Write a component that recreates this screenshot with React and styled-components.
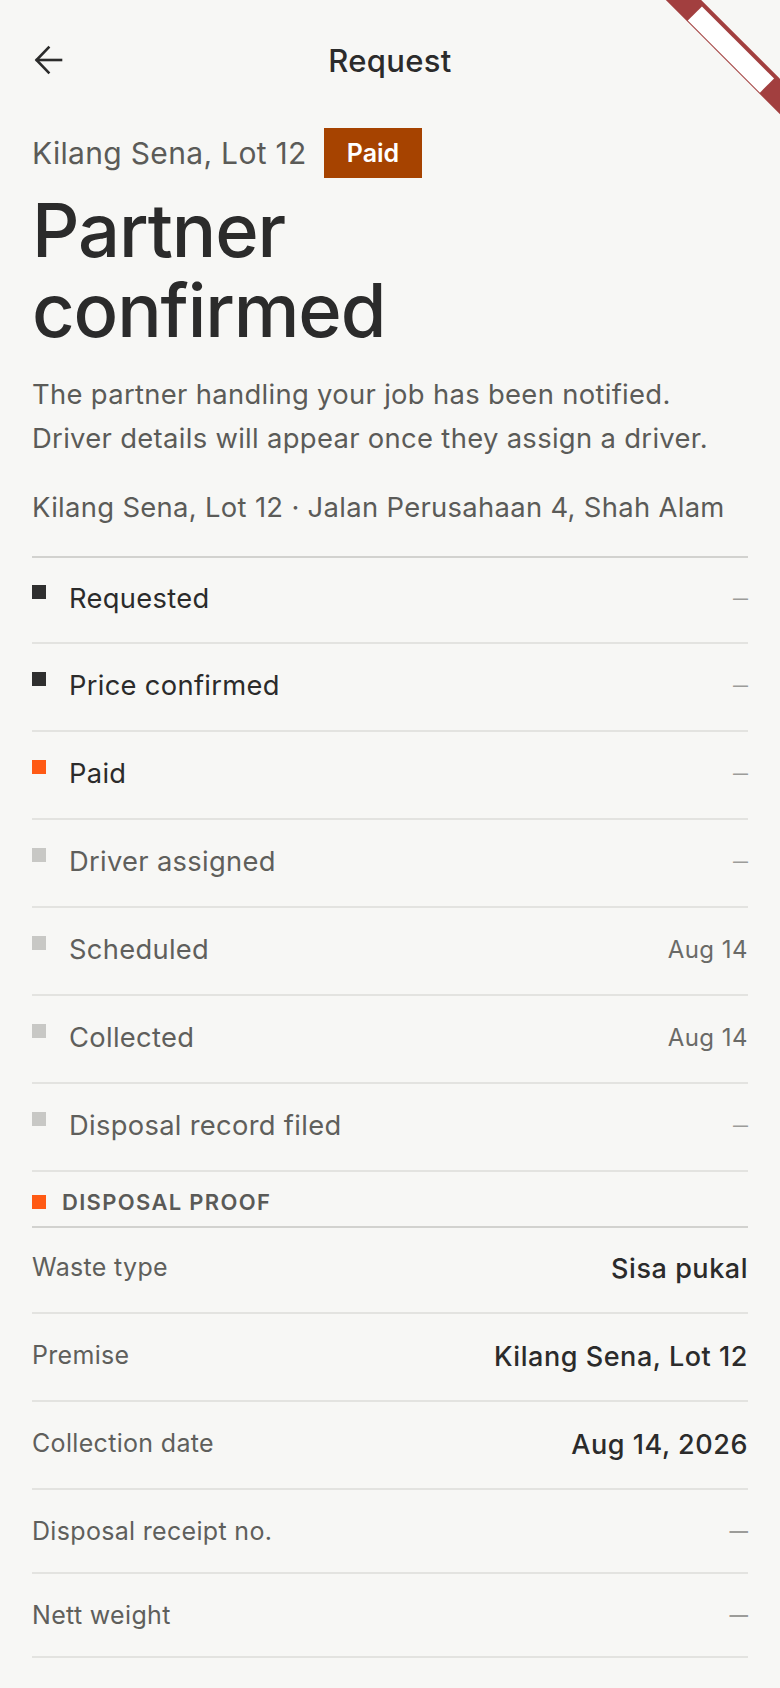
import React from "react";
import styled, { createGlobalStyle } from "styled-components";

const Global = createGlobalStyle`
  html, body { margin: 0; padding: 0; background: #F7F7F5; }
  body { font-family: Inter, "Noto Sans", sans-serif; -webkit-font-smoothing: antialiased; }
  * { box-sizing: border-box; }
`;

const Page = styled.div`
  position: relative;
  overflow: hidden;
  min-height: 1688px;
  padding: 0 32px 32px;
  background: #F7F7F5;
  color: #2B2B2B;
  letter-spacing: 0.02em;
`;

const Ribbon = styled.div`
  position: absolute;
  top: 35.5px;
  right: -72px;
  width: 240px;
  height: 25px;
  transform: rotate(45deg);
  background: #A23F3F;
  display: flex;
  justify-content: center;
  align-items: flex-start;
  padding-top: 3.5px;
  pointer-events: none;
`;

const RibbonLabel = styled.div`
  width: 102px;
  height: 20px;
  background: #FFFFFF;
`;

const Header = styled.header`
  display: grid;
  grid-template-columns: 48px 1fr 48px;
  align-items: center;
  height: 120px;
`;

const BackButton = styled.button`
  display: flex;
  align-items: center;
  justify-content: flex-start;
  padding: 0 0 0 2px;
  border: 0;
  background: none;
  color: #2B2B2B;
  cursor: pointer;
`;

const Title = styled.h2`
  margin: 0;
  text-align: center;
  font-size: 31px;
  font-weight: 500;
  color: #2B2B2B;
`;

const SubRow = styled.div`
  display: flex;
  align-items: center;
  gap: 17px;
  margin-top: 8px;
`;

const SubText = styled.span`
  font-size: 30px;
  color: #5B5B58;
`;

const Badge = styled.span`
  display: inline-flex;
  align-items: center;
  height: 50px;
  padding: 0 23px;
  background: #A64300;
  color: #FFFFFF;
  font-size: 25px;
  font-weight: 600;
  letter-spacing: 0;
`;

const Heading = styled.h1`
  margin: 12px 0 0;
  font-size: 74px;
  line-height: 80px;
  font-weight: 500;
  letter-spacing: -0.015em;
  color: #2B2B2B;
`;

const Lead = styled.p`
  margin: 22px 0 0;
  font-size: 27.4px;
  line-height: 44px;
  color: #5B5B58;
`;

const Address = styled.p`
  margin: 26px 0 0;
  font-size: 27.4px;
  line-height: 42px;
  color: #5B5B58;
`;

const StatusList = styled.ul`
  list-style: none;
  margin: 28px 0 0;
  padding: 0;
  border-top: 2px solid #D2D2CF;
`;

const StatusRow = styled.li`
  display: flex;
  align-items: center;
  min-height: 88px;
  padding-bottom: 3px;
  border-bottom: 2px solid #E3E3E0;

  &:first-child {
    min-height: 86px;
  }
`;

const Marker = styled.span`
  flex: none;
  width: 14px;
  height: 14px;
  margin-bottom: ${(p) => p.$lift || 0}px;
  background: ${(p) => p.$color};
`;

const StatusLabel = styled.span`
  margin-left: 23px;
  font-size: 27.3px;
  color: ${(p) => (p.$done ? "#2B2B2B" : "#5F5F5C")};
`;

const StatusValue = styled.span`
  margin-left: auto;
  font-size: ${(p) => (p.$empty ? 15 : 24)}px;
  font-weight: ${(p) => (p.$empty ? 600 : 400)};
  letter-spacing: ${(p) => (p.$empty ? 0 : "0.02em")};
  color: ${(p) => (p.$empty ? "#9C9C99" : "#6A6A67")};
`;

const SectionHeader = styled.div`
  display: flex;
  align-items: center;
  gap: 16px;
  height: 56px;
  padding-top: 5px;
  border-bottom: 2px solid #D2D2CF;
`;

const SectionTitle = styled.span`
  font-size: 22px;
  font-weight: 600;
  letter-spacing: 0.06em;
  color: #5A5A57;
`;

const KvRow = styled.div`
  display: flex;
  align-items: flex-start;
  justify-content: space-between;
  padding: 23px 0;
  border-bottom: 2px solid #E3E3E0;

  ${SectionHeader} + & {
    padding-top: 21px;
  }
`;

const KvLabel = styled.span`
  font-size: 25px;
  line-height: 36px;
  color: #5F5F5C;
`;

const KvValue = styled.span`
  font-size: ${(p) => (p.$empty ? 18.5 : 27)}px;
  line-height: ${(p) => (p.$empty ? 36 : 40)}px;
  font-weight: ${(p) => (p.$empty ? 600 : 500)};
  letter-spacing: ${(p) => (p.$empty ? 0 : "0.02em")};
  color: ${(p) => (p.$empty ? "#9C9C99" : "#2B2B2B")};
`;

const ArrowLeft = () => (
  <svg width="30" height="30" viewBox="0 0 30 30" fill="none" stroke="currentColor" strokeWidth="2.6" strokeLinecap="square" strokeLinejoin="miter">
    <path d="M27 15H3" />
    <path d="M14.5 2.5 2.5 15 14.5 27.5" />
  </svg>
);

const DARK = "#2F2F2F";
const ORANGE = "#FF5A14";
const LIGHT = "#C8C8C5";
const DASH = "—";

const steps = [
  { label: "Requested", color: DARK, done: true, value: DASH },
  { label: "Price confirmed", color: DARK, done: true, value: DASH },
  { label: "Paid", color: ORANGE, done: true, value: DASH },
  { label: "Driver assigned", color: LIGHT, done: false, value: DASH },
  { label: "Scheduled", color: LIGHT, done: false, value: "Aug 14" },
  { label: "Collected", color: LIGHT, done: false, value: "Aug 14" },
  { label: "Disposal record filed", color: LIGHT, done: false, value: DASH },
];

const proof = [
  { label: "Waste type", value: "Sisa pukal" },
  { label: "Premise", value: "Kilang Sena, Lot 12" },
  { label: "Collection date", value: "Aug 14, 2026" },
  { label: "Disposal receipt no.", value: DASH },
  { label: "Nett weight", value: DASH },
];

export default function App() {
  return (
    <Page>
      <Global />
      <Ribbon>
        <RibbonLabel />
      </Ribbon>
      <Header>
        <BackButton aria-label="Back">
          <ArrowLeft />
        </BackButton>
        <Title>Request</Title>
        <span />
      </Header>
      <SubRow>
        <SubText>Kilang Sena, Lot 12</SubText>
        <Badge>Paid</Badge>
      </SubRow>
      <Heading>
        Partner
        <br />
        confirmed
      </Heading>
      <Lead>
        The partner handling your job has been notified.
        <br />
        Driver details will appear once they assign a driver.
      </Lead>
      <Address>Kilang Sena, Lot 12 · Jalan Perusahaan 4, Shah Alam</Address>
      <StatusList>
        {steps.map((s) => (
          <StatusRow key={s.label}>
            <Marker $color={s.color} $lift={13} />
            <StatusLabel $done={s.done}>{s.label}</StatusLabel>
            <StatusValue $empty={s.value === DASH}>{s.value}</StatusValue>
          </StatusRow>
        ))}
      </StatusList>
      <section>
        <SectionHeader>
          <Marker $color={ORANGE} />
          <SectionTitle>DISPOSAL PROOF</SectionTitle>
        </SectionHeader>
        {proof.map((r) => (
          <KvRow key={r.label}>
            <KvLabel>{r.label}</KvLabel>
            <KvValue $empty={r.value === DASH}>{r.value}</KvValue>
          </KvRow>
        ))}
      </section>
    </Page>
  );
}
